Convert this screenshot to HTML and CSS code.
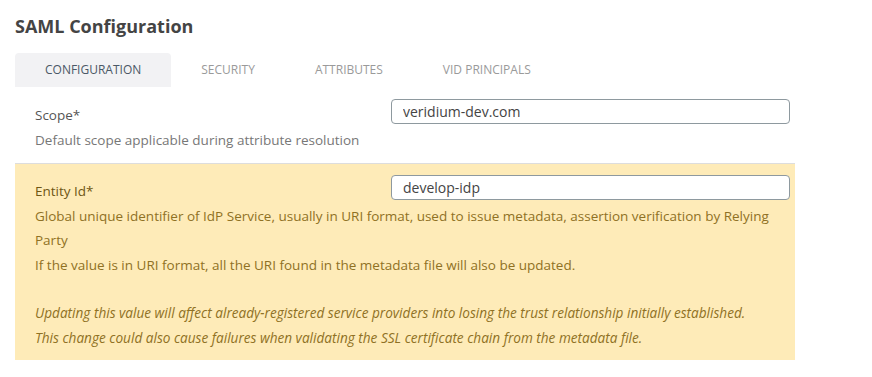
FILE: index.html
```html
<!DOCTYPE html>
<html lang="en">
<head>
    <meta charset="UTF-8">
    <title>SAML Configuration</title>
    <link rel="stylesheet" href="styles.css">
</head>
<body>

    <div class="page">
        <h1>SAML Configuration</h1>

        <nav class="tabs">
            <div class="tab active">Configuration</div>
            <div class="tab">Security</div>
            <div class="tab">Attributes</div>
            <div class="tab">VID Principals</div>
        </nav>

        <section class="setting">
            <div class="setting-head">
                <label class="setting-label">Scope*</label>
                <input class="setting-input" type="text" value="veridium-dev.com">
            </div>
            <p class="setting-desc">Default scope applicable during attribute resolution</p>
        </section>

        <section class="setting warning">
            <div class="setting-head">
                <label class="setting-label">Entity Id*</label>
                <input class="setting-input" type="text" value="develop-idp">
            </div>
            <p class="setting-desc">Global unique identifier of IdP Service, usually in URI format, used to issue metadata, assertion verification by Relying Party</p>
            <p class="setting-desc">If the value is in URI format, all the URI found in the metadata file will also be updated.</p>
            <p class="setting-desc note">Updating this value will affect already-registered service providers into losing the trust relationship initially established.<br>This change could also cause failures when validating the SSL certificate chain from the metadata file.</p>
        </section>
    </div>

</body>
</html>
```

FILE: styles.css
```css
body {
    font-family: "Open Sans", Arial, sans-serif;
    margin: 0;
    padding: 0;
    background: white;
    color: #555;
}

.page {
    width: 780px;
    padding: 14px 0 0 15px;
}

h1 {
    margin: 0;
    font-size: 18px;
    font-weight: 700;
    color: #444;
    line-height: 24px;
}

.tabs {
    display: flex;
    margin-top: 15px;
    margin-bottom: 1px;
}

.tab {
    padding: 0 30px;
    height: 34px;
    line-height: 34px;
    font-size: 12px;
    text-transform: uppercase;
    color: #9a9a9a;
    border-radius: 4px 4px 0 0;
}

.tab.active {
    background: #f2f2f4;
    color: #4b5866;
}

.setting {
    padding: 11px 5px 10px 20px;
}

.setting-head {
    display: flex;
    justify-content: space-between;
    align-items: flex-start;
    margin-bottom: 1px;
}

.setting-label {
    font-size: 13.5px;
    line-height: 24px;
    margin-top: 4px;
    color: #555;
}

.setting-input {
    width: 399px;
    height: 25px;
    box-sizing: border-box;
    border: 1px solid #8e999f;
    border-radius: 4px;
    padding: 0 11px;
    font-family: "Open Sans", Arial, sans-serif;
    font-size: 14px;
    color: #444;
    background: white;
}

.setting-desc {
    margin: 0;
    font-size: 13.5px;
    line-height: 24.5px;
    color: #777;
}

.warning {
    background: #feebb8;
    border-top: 1px solid #ddd;
}

.warning .setting-label {
    color: #6e5614;
}

.warning .setting-desc {
    color: #8f7124;
}

.warning .note {
    font-style: italic;
    font-size: 13.6px;
    margin-top: 24px;
}
```
